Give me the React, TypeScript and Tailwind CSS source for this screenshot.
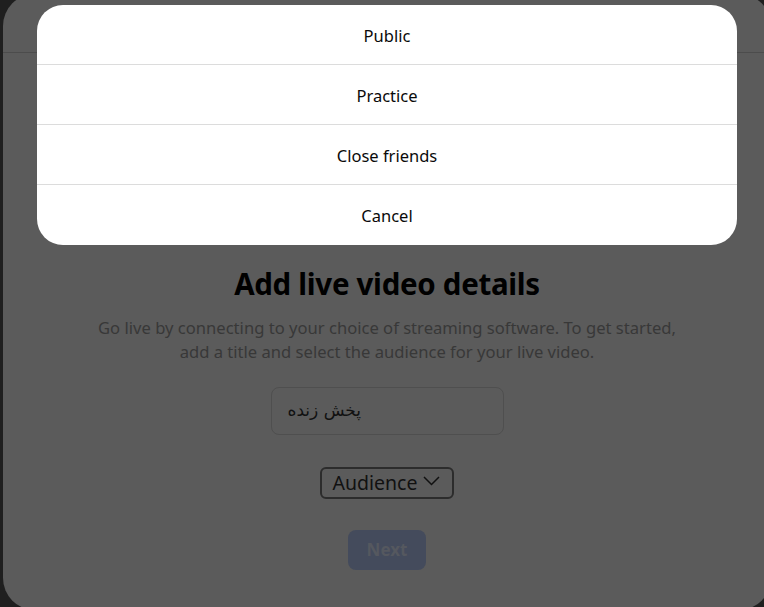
const sheetOptions = ["Public", "Practice", "Close friends", "Cancel"];

function AudienceSheet() {
  return (
    <div className="absolute left-[37px] top-[5px] w-[700px] overflow-hidden rounded-[26px] bg-white">
      {sheetOptions.map((option, index) => (
        <button
          key={option}
          type="button"
          className={`flex h-[60px] w-full items-center justify-center pt-[3px] text-[16.5px] text-[#0a0a0a] ${
            index < sheetOptions.length - 1 ? "border-b border-[#dcdcdc]" : ""
          }`}
        >
          {option}
        </button>
      ))}
    </div>
  );
}

export default function App() {
  return (
    <div
      className="relative h-[607px] w-[764px] overflow-hidden bg-[#1f1f1f]"
      style={{ fontFamily: '"Noto Sans", "DejaVu Sans", sans-serif' }}
    >
      <div className="ml-[3px] -mt-[6px] h-[616px] w-[768px] rounded-[32px] bg-[#5b5b5b]">
        <div className="h-[59px] border-b border-[#4c4c4c]" />

        <div className="flex flex-col items-center pt-[213px]">
          <h1 className="text-[29.5px] font-bold leading-[36px] tracking-[-0.3px] text-black">
            Add live video details
          </h1>
          <p className="mt-[14px] text-center text-[16.6px] leading-[24px] text-[#383838]">
            Go live by connecting to your choice of streaming software. To get started,
            <br />
            add a title and select the audience for your live video.
          </p>

          <div className="mt-[23px] flex h-[48px] w-[233px] items-center rounded-[8px] border border-[#4f4f4f] px-[16px]">
            <span
              className="text-[17px] text-[#111]"
              style={{ fontFamily: '"DejaVu Sans", "Noto Sans", sans-serif' }}
            >
              پخش زنده
            </span>
          </div>

          <button
            type="button"
            className="mt-[32px] flex h-[32px] items-center gap-[6px] rounded-[6px] border-2 border-[#2c2c2c] pl-[11px] pr-[12px] text-[19.5px] text-[#111]"
          >
            Audience
            <svg width="17" height="10" viewBox="0 0 17 10" fill="none" className="mt-[-4px]">
              <polyline points="1,1 8.5,8.5 16,1" stroke="#111" strokeWidth="1.5" />
            </svg>
          </button>

          <button
            type="button"
            className="mt-[31px] flex h-[40px] w-[78px] items-center justify-center rounded-[8px] bg-[#444b5c] text-[17px] font-bold text-[#55585f]"
          >
            Next
          </button>
        </div>
      </div>

      <AudienceSheet />
    </div>
  );
}
